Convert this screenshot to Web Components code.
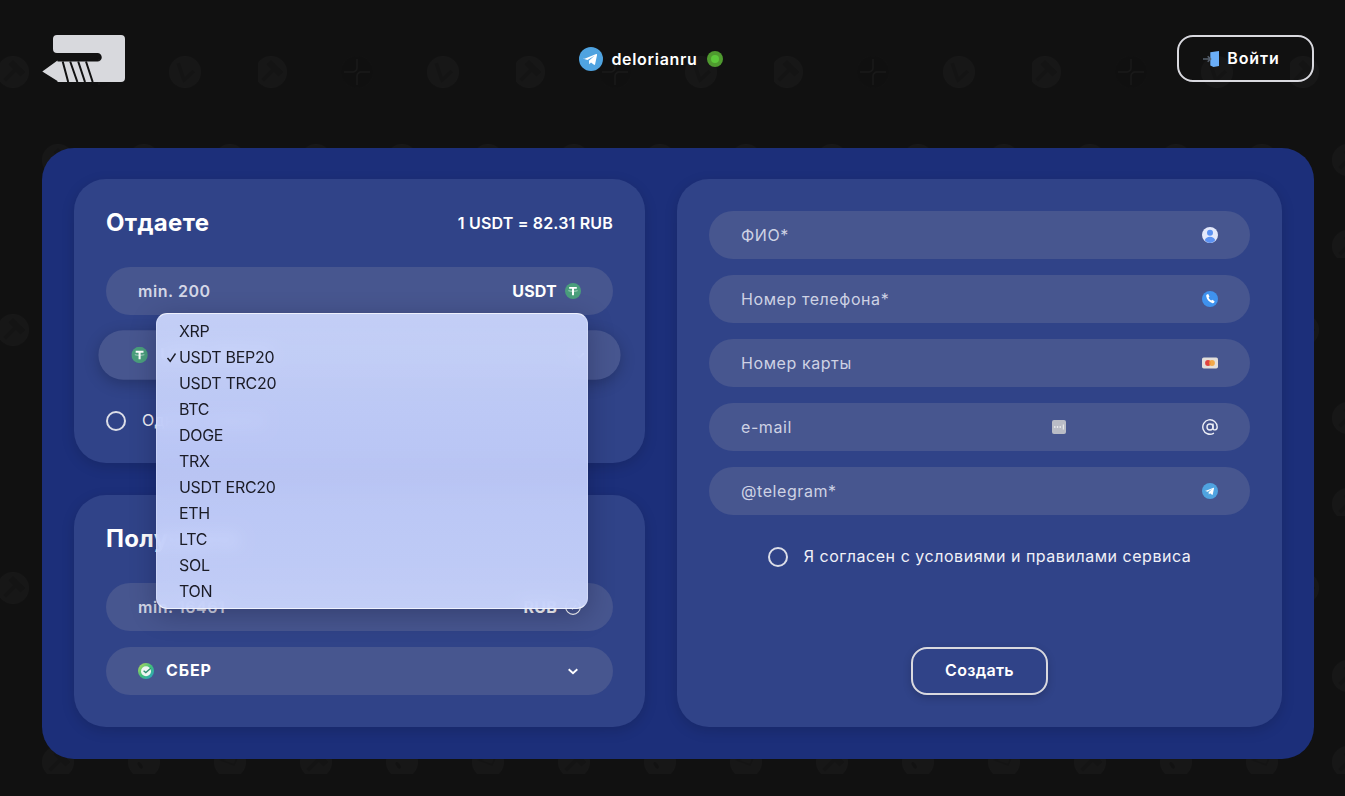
<!DOCTYPE html>
<html lang="ru">
<head>
<meta charset="utf-8">
<title>delorian</title>
<style>
html,body{margin:0;height:100%;overflow:hidden}
body{background:#111;font-family:"Inter","Liberation Sans",sans-serif;color:#fff}
</style>
</head>
<body>
<page-shell>
  <site-header></site-header>
  <exchange-card>
    <panel-card slot="left" title-text="Отдаете" rate="1 USDT = 82.31 RUB">
      <pill-field label="min. 200" tone="dim" weight="600" trailing="USDT" icon="usdt"></pill-field>
      <pill-field class="lift" label="USDT BEP20" lead="usdt" chevron></pill-field>
      <round-check style="margin-top:16px">Одной суммой</round-check>
    </panel-card>
    <panel-card slot="left" title-text="Получаете">
      <pill-field label="min. 16461" tone="dim" weight="600" trailing="RUB" icon="rub"></pill-field>
      <pill-field label="СБЕР" lead="sber" chevron></pill-field>
    </panel-card>
    <panel-card slot="right" fill>
      <pill-field label="ФИО*" tone="ph" icon="user"></pill-field>
      <pill-field label="Номер телефона*" tone="ph" icon="phone"></pill-field>
      <pill-field label="Номер карты" tone="ph" icon="card"></pill-field>
      <pill-field label="e-mail" tone="ph" icon="at" mid="key"></pill-field>
      <pill-field label="@telegram*" tone="ph" icon="tg"></pill-field>
      <round-check center style="margin-top:16px;letter-spacing:.53px">Я согласен с условиями и правилами сервиса</round-check>
      <outline-button style="margin:auto auto 0">Создать</outline-button>
    </panel-card>
    <native-menu slot="overlay" selected="USDT BEP20" items="XRP|USDT BEP20|USDT TRC20|BTC|DOGE|TRX|USDT ERC20|ETH|LTC|SOL|TON"></native-menu>
  </exchange-card>
</page-shell>
<script>
const ICONS = {
  tg: `<svg viewBox="0 0 24 24"><circle cx="12" cy="12" r="12" fill="#4fa3e0"/><path fill="#fff" d="M5 11.9 17.2 7.1c.6-.2 1 .1.85.95l-1.95 9.2c-.15.65-.55.8-1.1.5l-3-2.2-1.7 1.6-.4-3.4 5.6-5.1-7 4.4-3.4-1c-.65-.2-.65-.65.1-.95z"/></svg>`,
  usdt: `<svg viewBox="0 0 16 16"><circle cx="8" cy="8" r="8" fill="#4a9e7c"/><path fill="#fff" d="M4.200 3.900h7.600v1.900H9v6.400H7V5.800H4.200z"/><path d="M3.400 7.700c2.800.8 6.400.8 9.200 0" fill="none" stroke="#fff" stroke-opacity=".75" stroke-width=".7"/></svg>`,
  rub: `<svg viewBox="0 0 16 16"><circle cx="8" cy="8" r="7.300" fill="none" stroke="#fff" stroke-width="1.200"/><path d="M5 8l2.500 2L11 6" fill="none" stroke="#fff" stroke-width="1.200"/></svg>`,
  sber: `<svg viewBox="0 0 16 16"><defs><linearGradient id="s" x1="0" y1="0" x2="1" y2="1"><stop offset="0" stop-color="#c4dc5a"/><stop offset=".5" stop-color="#3fc07a"/><stop offset="1" stop-color="#2a9fc8"/></linearGradient></defs><circle cx="8" cy="8" r="8" fill="url(#s)"/><circle cx="8" cy="8.200" r="5" fill="#eef6f2"/><path d="M5.600 7.700l2.200 1.900 5-4.300" fill="none" stroke="#2f8f72" stroke-width="1.400"/></svg>`,
  user: `<svg viewBox="0 0 16 16"><circle cx="8" cy="8" r="8" fill="#e4e9fb"/><circle cx="8" cy="5.800" r="3" fill="#5d93f2"/><path fill="#5d93f2" d="M2.700 13.300c.8-2.300 2.800-3.500 5.300-3.500s4.500 1.200 5.300 3.500A8 8 0 0 1 8 16a8 8 0 0 1-5.300-2.700z"/></svg>`,
  phone: `<svg viewBox="0 0 16 16"><circle cx="8" cy="8" r="8" fill="#3f92ee"/><path fill="#fff" d="M4.900 3.500l1.300-.4 1.300 2.600-.9.900c.4 1.300 1.400 2.400 2.700 3l1-.9 2.300 1.500-.5 1.300c-.3.600-1 .900-1.600.7C6.900 10.900 4.700 8.400 4.200 5c-.1-.7.200-1.300.700-1.500z"/></svg>`,
  card: `<svg viewBox="0 0 16 12" style="height:12px"><rect width="16" height="11" y=".5" rx="1.800" fill="#e4dfda"/><circle cx="6" cy="6" r="2.900" fill="#e0443f"/><circle cx="10" cy="6" r="2.900" fill="#f2a33a" fill-opacity=".9"/></svg>`,
  at: `<svg viewBox="0 0 16 16"><circle cx="8" cy="8" r="3" fill="none" stroke="#eceef6" stroke-width="1.400"/><path d="M11 5v4.300c0 2.300 4.200 2.300 4.200-1.300A7.200 7.200 0 1 0 11.500 14.300" fill="none" stroke="#eceef6" stroke-width="1.400" stroke-linecap="round"/></svg>`,
  key: `<svg viewBox="0 0 14 14" style="width:14px;height:14px"><rect width="14" height="14" rx="2" fill="#b9bcc6"/><circle cx="2.800" cy="7" r=".8" fill="#fff"/><circle cx="5.500" cy="7" r=".8" fill="#fff"/><circle cx="8.200" cy="7" r=".8" fill="#fff"/><path d="M11.300 4.500v5" stroke="#fff" stroke-width=".8"/></svg>`,
  chev: `<svg viewBox="0 0 16 16"><path d="M3.700 6.300 8 10.300l4.300-4" fill="none" stroke="#fff" stroke-width="1.900"/></svg>`,
  door: `<svg viewBox="0 0 16 16"><path fill="#6aaef8" d="M7.300 1.200 16 0V15L10.500 16 7.300 14.500z"/><path d="M0 8h7.500M4.700 5.200 7.500 8 4.700 10.800" fill="none" stroke="#56606e" stroke-width="1.600"/></svg>`
};
const LOGO = `<svg viewBox="42 35 83 47" width="83" height="47" style="display:block"><path fill="#d8d9dd" d="M57 35h64a4 4 0 0 1 4 4v39a4 4 0 0 1-4 4H57.500v-1L42.300 71.500 57.500 60.500v1H97.500a4.200 4.200 0 0 0 0-8.500H57a4 4 0 0 1-4-4V39a4 4 0 0 1 4-4z"/><path d="M62.700 61.500 68.200 82M70.200 61.500 77.400 82M78.200 61.500 85 82M86 61.500 92.700 82" stroke="#111" stroke-width="2" fill="none"/></svg>`;
function define(name, render){
  customElements.define(name, class extends HTMLElement{
    connectedCallback(){
      if(this.shadowRoot) return;
      this.attachShadow({mode:'open'}).innerHTML = render(this);
    }
  });
}
define('app-icon', el => `<style>:host{display:inline-flex;align-items:center;justify-content:center;width:16px;height:16px;flex:none}svg{width:16px;height:16px;display:block}</style>${ICONS[el.getAttribute('name')]||''}`);

const ink = '#141414';
const hammer = `<g fill="${ink}" transform="rotate(45)"><rect x="-9" y="-9" width="18" height="7" rx="1"/><rect x="-2" y="-3" width="4" height="15"/></g>`;
const plus = `<path d="M-13 0h9c2 0 4-2 4-4v-9M13 0H4c-2 0-4 2-4 4v9" fill="none" stroke="#191919" stroke-width="1.500"/>`;
const vee = `<path d="M-7 -9-1 8 9 -1" fill="none" stroke="${ink}" stroke-width="4"/>`;
const arrow = `<path d="M-9 -2 9 -8 4 3z" fill="none" stroke="${ink}" stroke-width="2"/>`;
const dot = `<ellipse cx="-5" cy="1" rx="2" ry="4" fill="#121212" transform="rotate(-30)"/>`;
function cell(x,y,inner,c='#171717'){return `<g transform="translate(${x} ${y})"><circle r="16" fill="${c}"/>${inner}</g>`}
const tile = `<svg xmlns="http://www.w3.org/2000/svg" width="258" height="258">`+
  cell(13,72,hammer)+cell(99,72,plus,'#101010')+cell(185,72,vee)+
  cell(58,160,hammer)+cell(144,160,dot)+cell(230,160,arrow)+
  cell(58,246,hammer)+cell(144,246,dot)+cell(230,246,arrow)+
  `</svg>`;
const tileUrl = 'data:image/svg+xml,'+encodeURIComponent(tile);

define('page-shell', () => `<style>
:host{display:flex;flex-direction:column;box-sizing:border-box;height:796px;padding:35px 31px 37px 42px;background:#111 url("${tileUrl}") 0 0/258px 258px}
</style><slot></slot>`);

define('site-header', () => `<style>
:host{display:flex;justify-content:space-between;align-items:center;height:47px;margin-bottom:66px}
.tg{display:flex;align-items:center;font-size:16px;font-weight:600;letter-spacing:.7px;color:#fff}
.ti{display:flex;width:24px;height:24px;margin-right:8px}
.dot{width:16px;height:16px;border-radius:50%;background:#4f9a2f;margin-left:9px;display:flex;align-items:center;justify-content:center}
.dot i{width:8px;height:8px;border-radius:50%;background:#5cc83a}
</style>
<div>${LOGO}</div>
<div class="tg"><span class="ti">${ICONS.tg.replace('<svg','<svg width="24" height="24"')}</span>delorianru<span class="dot"><i></i></span></div>
<outline-button icon="door">Войти</outline-button>`);

customElements.define('outline-button', class extends HTMLElement{
  connectedCallback(){
    if(this.shadowRoot) return;
    const ic=this.getAttribute('icon');
    this.attachShadow({mode:'open'}).innerHTML=`<style>
:host{display:flex;align-items:center;justify-content:center;gap:8px;box-sizing:border-box;width:137px;height:${ic?47:48}px;${ic?'padding-right:8px;':''}border:2px solid #d9d9df;border-radius:16px;font-size:16px;font-weight:600;letter-spacing:${ic?.9:.3}px;color:#fff;${ic?'':'box-shadow:0 3px 8px rgba(0,0,0,.18);'}}
span{padding-bottom:2px}
</style>${ic?`<app-icon name="${ic}"></app-icon>`:''}<span><slot></slot></span>`;
  }
});

define('exchange-card', () => `<style>
:host{display:grid;grid-template-columns:571px 605px;gap:32px;box-sizing:border-box;width:1272px;height:611px;padding:31px 32px 32px;background:#1c2f7a;border-radius:32px;position:relative}
.col{display:flex;flex-direction:column;gap:32px}
.col ::slotted(*){flex:none}
.r{display:flex}
</style>
<div class="col"><slot name="left"></slot></div>
<div class="r"><slot name="right"></slot></div>
<slot name="overlay"></slot>`);

customElements.define('panel-card', class extends HTMLElement{
  connectedCallback(){
    if(this.shadowRoot) return;
    const t=this.getAttribute('title-text'), r=this.getAttribute('rate');
    this.attachShadow({mode:'open'}).innerHTML=`<style>
:host{display:flex;flex-direction:column;gap:16px;box-sizing:border-box;padding:32px;background:#304388;border-radius:32px;box-shadow:0 4px 14px rgba(0,0,0,.14);${this.hasAttribute('fill')?'width:100%;':''}}
.h{display:flex;justify-content:space-between;align-items:center;height:24px;margin-bottom:16px}
h2{margin:0;padding-bottom:2px;font-size:24px;font-weight:700;letter-spacing:.35px;color:#fff}
.rate{font-size:16px;font-weight:600;letter-spacing:.17px;color:#fff}
</style>${t?`<div class="h"><h2>${t}</h2>${r?`<span class="rate">${r}</span>`:''}</div>`:''}<slot></slot>`;
  }
});

customElements.define('pill-field', class extends HTMLElement{
  connectedCallback(){
    if(this.shadowRoot) return;
    const a=n=>this.getAttribute(n);
    const tone=a('tone'), isPh=tone==='ph', dim=tone==='dim';
    const lift=this.classList.contains('lift');
    this.attachShadow({mode:'open'}).innerHTML=`<style>
:host{display:flex;align-items:center;box-sizing:border-box;height:48px;padding:0 32px;background:#47568f;border-radius:24px;font-size:16px;color:#fff;${lift?'transform:scale(1.03);box-shadow:0 4px 14px rgba(0,0,0,.22);':''}}
.lab{flex:none;font-weight:${a('weight')||(isPh?400:700)};letter-spacing:${isPh?'.58px':dim?'.55px':'.9px'};color:${isPh?'#ced2e4':dim?'#d4d7e6':'#fff'};${a('lead')?'padding-bottom:2px;':''}}
.lead{margin-right:12px}
.sp{flex:1}
.tr{font-weight:700;letter-spacing:.2px;margin-right:8px}
.midw{flex:none;margin-right:135px;display:flex}
</style>
${a('lead')?`<app-icon class="lead" name="${a('lead')}"></app-icon>`:''}
<span class="lab">${a('label')}</span><span class="sp"></span>
${a('mid')?`<span class="midw"><app-icon name="${a('mid')}"></app-icon></span>`:''}
${a('trailing')?`<span class="tr">${a('trailing')}</span>`:''}
${a('icon')?`<app-icon name="${a('icon')}"></app-icon>`:''}
${this.hasAttribute('chevron')?`<app-icon name="chev"></app-icon>`:''}`;
  }
});

customElements.define('round-check', class extends HTMLElement{
  connectedCallback(){
    if(this.shadowRoot) return;
    this.attachShadow({mode:'open'}).innerHTML=`<style>
:host{display:flex;align-items:center;gap:16px;height:20px;font-size:16px;letter-spacing:.38px;color:#f0f1f7;${this.hasAttribute('center')?'justify-content:center;':''}}
i{box-sizing:border-box;width:20px;height:20px;border-radius:50%;border:2px solid #dcdee8;flex:none}
span{padding-bottom:2px}
</style><i></i><span><slot></slot></span>`;
  }
});

customElements.define('native-menu', class extends HTMLElement{
  connectedCallback(){
    if(this.shadowRoot) return;
    const sel=this.getAttribute('selected');
    const rows=this.getAttribute('items').split('|').map(t=>`<div class="it">${t===sel?'<svg viewBox="0 0 11 11"><path d="M1.500 6 4.200 9.300 9.500 1.500" fill="none" stroke="#1b1c26" stroke-width="1.400"/></svg>':''}${t}</div>`).join('');
    this.attachShadow({mode:'open'}).innerHTML=`<style>
:host{position:absolute;left:114px;top:165px;box-sizing:border-box;width:432px;height:296px;padding:4px 0;border-radius:11px;border:1px solid rgba(255,255,255,.72);border-left-color:rgba(255,255,255,.25);border-right-color:rgba(255,255,255,.25);background:linear-gradient(180deg,rgba(207,218,255,.92),rgba(198,209,254,.92) 50%,rgba(205,216,255,.92));-webkit-backdrop-filter:blur(8px);backdrop-filter:blur(8px);box-shadow:0 6px 26px rgba(0,0,30,.26);z-index:5;font-family:"Inter","Liberation Sans",sans-serif;font-size:16px;letter-spacing:-.3px;color:#1b1c26}
.it{position:relative;height:26px;line-height:26px;padding-left:22px}
svg{position:absolute;left:9px;top:8px;width:11px;height:11px}
</style>${rows}`;
  }
});
</script>
</body>
</html>
